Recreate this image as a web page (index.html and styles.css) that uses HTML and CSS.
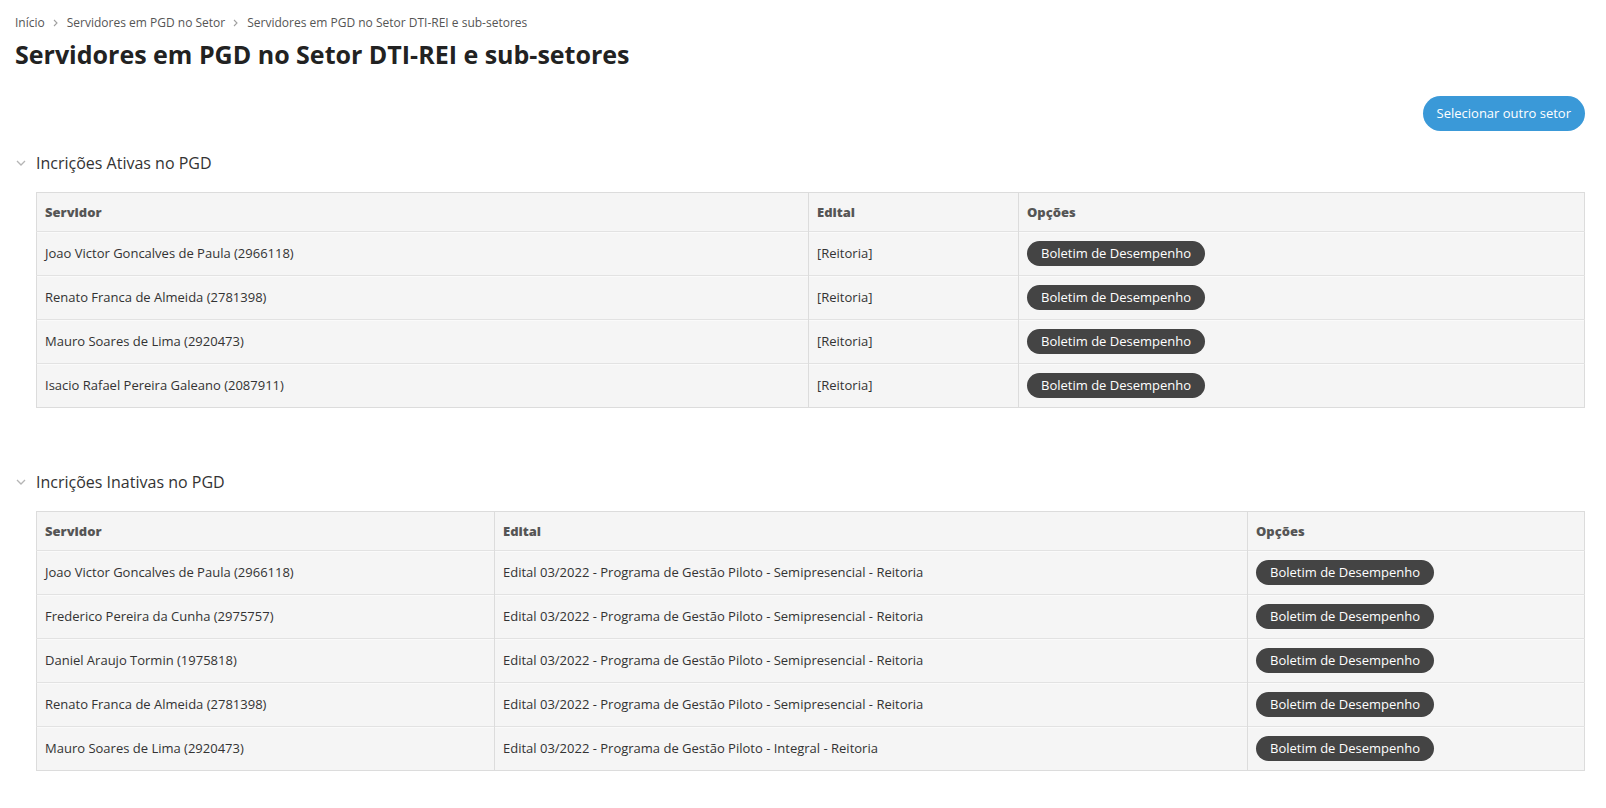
FILE: index.html
```html
<!DOCTYPE html>
<html lang="pt-BR">
<head>
<meta charset="utf-8">
<title>Servidores em PGD no Setor DTI-REI e sub-setores</title>
<link rel="stylesheet" href="styles.css">
</head>
<body>
<div class="page">
  <nav class="breadcrumb">
    <a href="#">Início</a>
    <svg class="sep" width="5" height="8" viewBox="0 0 5 8"><path d="M1 1l3 3-3 3" fill="none" stroke="#a0a0a0" stroke-width="1.1"/></svg>
    <a href="#">Servidores em PGD no Setor</a>
    <svg class="sep" width="5" height="8" viewBox="0 0 5 8"><path d="M1 1l3 3-3 3" fill="none" stroke="#a0a0a0" stroke-width="1.1"/></svg>
    <span class="current">Servidores em PGD no Setor DTI-REI e sub-setores</span>
  </nav>
  <h1 class="title">Servidores em PGD no Setor DTI-REI e sub-setores</h1>

  <div class="toolbar">
    <a class="btn-primary" href="#">Selecionar outro setor</a>
  </div>

  <section class="box">
    <h2 class="box-title">
      <svg class="chev" width="10" height="6" viewBox="0 0 10 6"><path d="M1 1l4 4 4-4" fill="none" stroke="#b5b5b5" stroke-width="1.3"/></svg>
      Incrições Ativas no PGD
    </h2>
    <table class="grid grid-a">
      <colgroup><col class="a1"><col class="a2"><col class="a3"></colgroup>
      <thead><tr><th>Servidor</th><th>Edital</th><th>Opções</th></tr></thead>
      <tbody>
        <tr><td>Joao Victor Goncalves de Paula (2966118)</td><td>[Reitoria]</td><td><a class="btn-dark" href="#">Boletim de Desempenho</a></td></tr>
        <tr><td>Renato Franca de Almeida (2781398)</td><td>[Reitoria]</td><td><a class="btn-dark" href="#">Boletim de Desempenho</a></td></tr>
        <tr><td>Mauro Soares de Lima (2920473)</td><td>[Reitoria]</td><td><a class="btn-dark" href="#">Boletim de Desempenho</a></td></tr>
        <tr><td>Isacio Rafael Pereira Galeano (2087911)</td><td>[Reitoria]</td><td><a class="btn-dark" href="#">Boletim de Desempenho</a></td></tr>
      </tbody>
    </table>
  </section>

  <section class="box">
    <h2 class="box-title">
      <svg class="chev" width="10" height="6" viewBox="0 0 10 6"><path d="M1 1l4 4 4-4" fill="none" stroke="#b5b5b5" stroke-width="1.3"/></svg>
      Incrições Inativas no PGD
    </h2>
    <table class="grid grid-b">
      <colgroup><col class="b1"><col class="b2"><col class="b3"></colgroup>
      <thead><tr><th>Servidor</th><th>Edital</th><th>Opções</th></tr></thead>
      <tbody>
        <tr><td>Joao Victor Goncalves de Paula (2966118)</td><td>Edital 03/2022 - Programa de Gestão Piloto - Semipresencial - Reitoria</td><td><a class="btn-dark" href="#">Boletim de Desempenho</a></td></tr>
        <tr><td>Frederico Pereira da Cunha (2975757)</td><td>Edital 03/2022 - Programa de Gestão Piloto - Semipresencial - Reitoria</td><td><a class="btn-dark" href="#">Boletim de Desempenho</a></td></tr>
        <tr><td>Daniel Araujo Tormin (1975818)</td><td>Edital 03/2022 - Programa de Gestão Piloto - Semipresencial - Reitoria</td><td><a class="btn-dark" href="#">Boletim de Desempenho</a></td></tr>
        <tr><td>Renato Franca de Almeida (2781398)</td><td>Edital 03/2022 - Programa de Gestão Piloto - Semipresencial - Reitoria</td><td><a class="btn-dark" href="#">Boletim de Desempenho</a></td></tr>
        <tr><td>Mauro Soares de Lima (2920473)</td><td>Edital 03/2022 - Programa de Gestão Piloto - Integral - Reitoria</td><td><a class="btn-dark" href="#">Boletim de Desempenho</a></td></tr>
      </tbody>
    </table>
  </section>
</div>
</body>
</html>
```

FILE: styles.css
```css
* { box-sizing: border-box; }
html, body { margin: 0; padding: 0; background: #fff; }
body {
  font-family: "Open Sans", "Noto Sans", sans-serif;
  color: #333;
  font-size: 13px;
}
.page {
  padding: 15px 21px 30px 15px;
}
.breadcrumb {
  font-size: 12px;
  line-height: 16px;
  color: #555;
  display: flex;
  align-items: center;
}
.breadcrumb a { color: #555; text-decoration: none; }
.breadcrumb .sep {
  margin: 0 9px 0 8px;
}
.title {
  margin: 7px 0 0 0;
  font-size: 25px;
  line-height: 32px;
  font-weight: 700;
  color: #222;
}
.toolbar {
  display: flex;
  justify-content: flex-end;
  margin-top: 26px;
}
.btn-primary {
  display: inline-block;
  background: #3a99d8;
  color: #fff;
  text-decoration: none;
  font-size: 13px;
  line-height: 19px;
  padding: 8px 14px;
  border-radius: 18px;
}
.box { margin-top: 21px; }
.box + .box { margin-top: 63px; }
.box-title {
  margin: 0;
  display: flex;
  align-items: center;
  font-size: 16px;
  line-height: 22px;
  font-weight: 400;
  color: #333;
}
.chev { margin: 0 10px 0 1px; }
.grid {
  margin: 18px 0 0 21px;
  width: calc(100% - 21px);
  border-collapse: collapse;
  table-layout: fixed;
  background: #f5f5f5;
  border: 1px solid #dcdcdc;
}
.grid .a1 { width: 772px; }
.grid .a2 { width: 210px; }
.grid .b1 { width: 458px; }
.grid .b2 { width: 753px; }
.grid th {
  text-align: left;
  font-weight: 800;
  color: #555;
  font-size: 13px;
  line-height: 16px;
  padding: 11px 8px;
  border-left: 1px solid #dcdcdc;
}
.grid td {
  font-size: 13px;
  line-height: 25px;
  height: 44px;
  padding: 0 8px;
  color: #333;
  border-left: 1px solid #dcdcdc;
  border-top: 1px solid #e2e2e2;
  box-shadow: inset 0 1px 0 #fafafa;
  vertical-align: middle;
}
.grid th:first-child, .grid td:first-child { border-left: 0; }
.btn-dark {
  display: inline-block;
  background: #444;
  color: #fff;
  text-decoration: none;
  font-size: 13px;
  line-height: 17px;
  padding: 4px 14px;
  border-radius: 13px;
  vertical-align: top;
}
```
